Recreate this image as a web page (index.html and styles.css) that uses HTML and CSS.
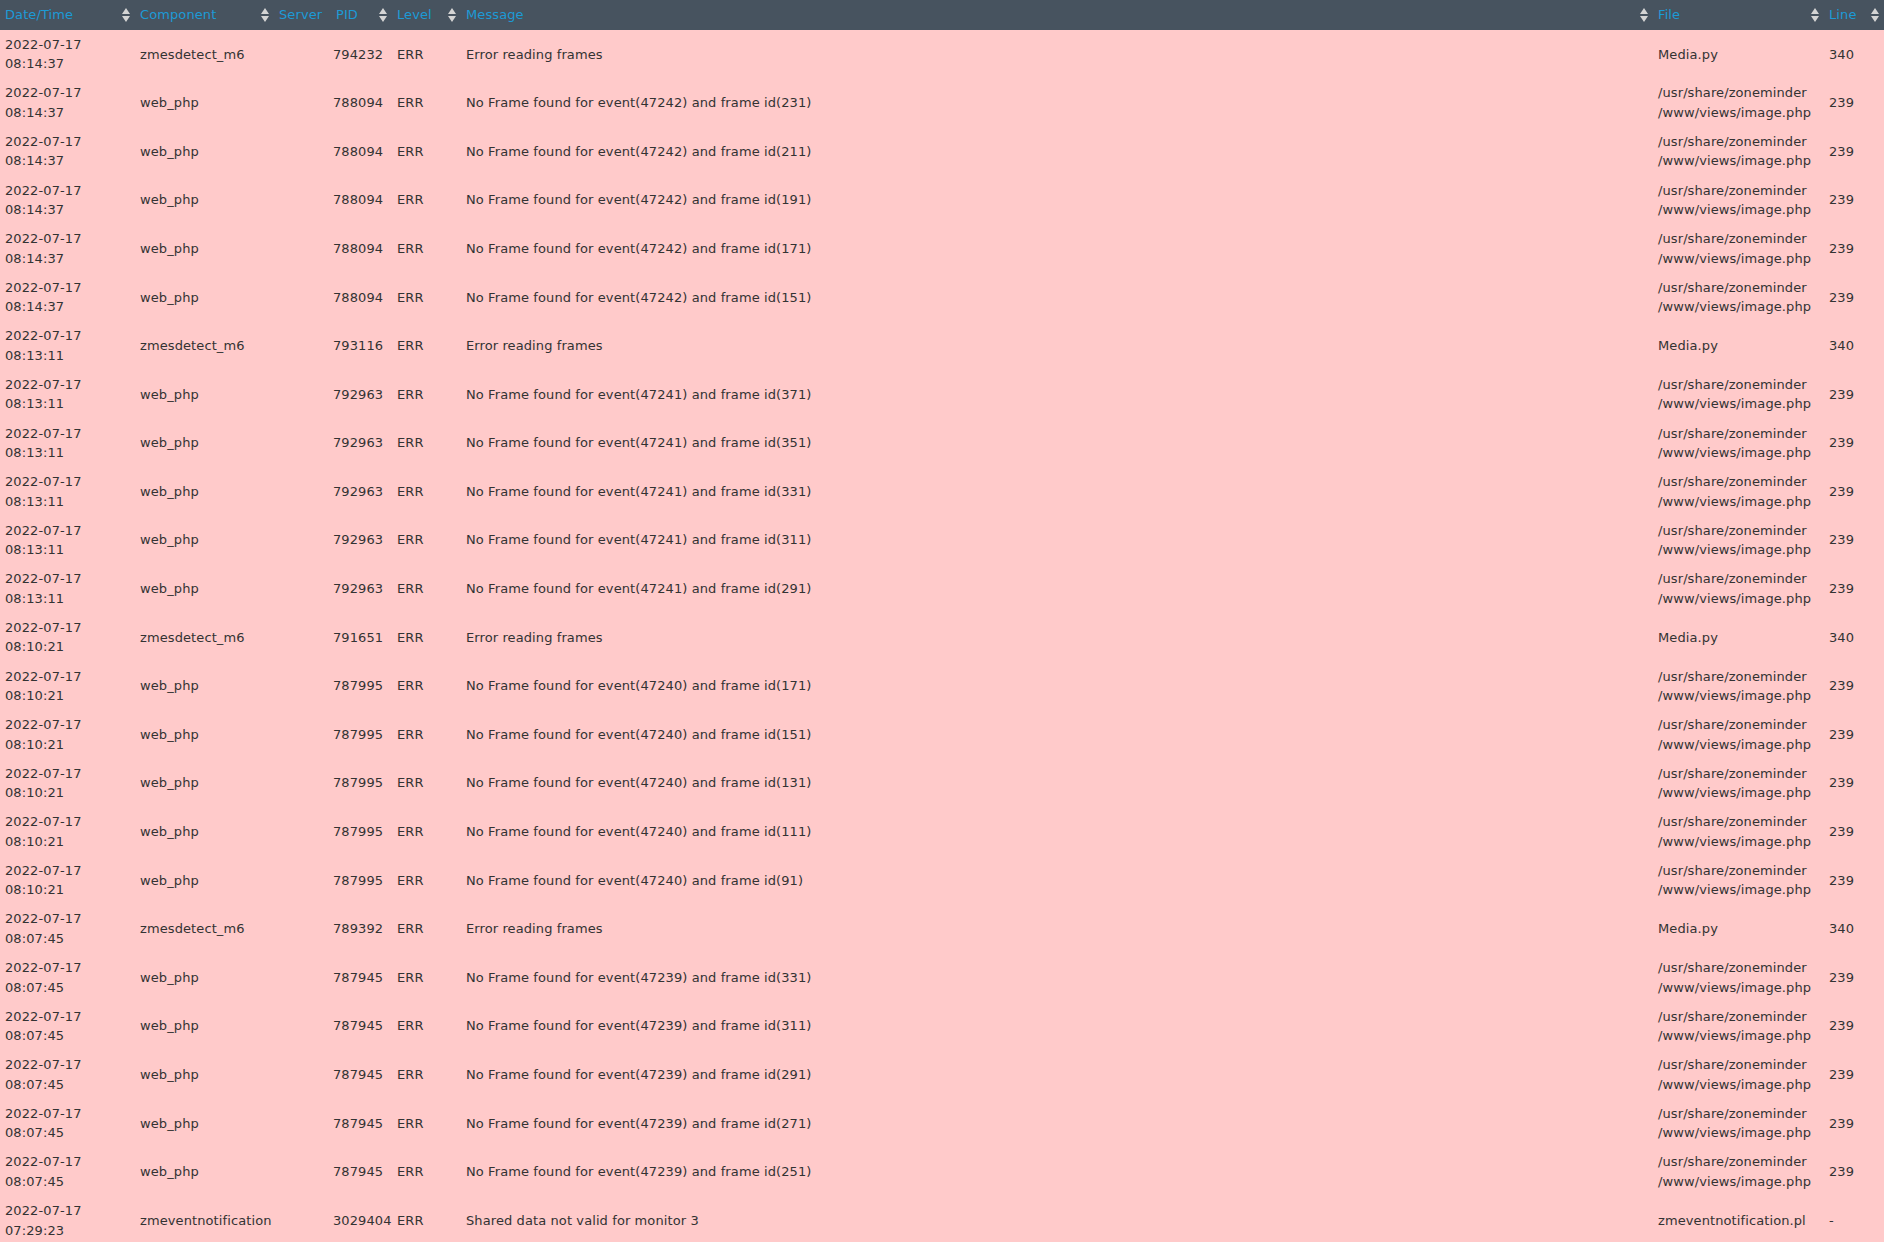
FILE: index.html
```html
<!DOCTYPE html>
<html>
<head>
<meta charset="utf-8">
<link rel="stylesheet" href="styles.css">
</head>
<body>
<table class="log">
<colgroup>
<col class="c-date"><col class="c-comp"><col class="c-server"><col class="c-pid"><col class="c-level"><col class="c-msg"><col class="c-file"><col class="c-line">
</colgroup>
<thead>
<tr>
<th><div class="th-in"><span>Date/Time</span><svg class="sort" viewBox="0 0 8 14"><path d="M0 6 L4 0 L8 6Z M0 8 L4 14 L8 8Z"/></svg></div></th>
<th><div class="th-in"><span>Component</span><svg class="sort" viewBox="0 0 8 14"><path d="M0 6 L4 0 L8 6Z M0 8 L4 14 L8 8Z"/></svg></div></th>
<th><div class="th-in"><span>Server</span></div></th>
<th><div class="th-in"><span>PID</span><svg class="sort" viewBox="0 0 8 14"><path d="M0 6 L4 0 L8 6Z M0 8 L4 14 L8 8Z"/></svg></div></th>
<th><div class="th-in"><span>Level</span><svg class="sort" viewBox="0 0 8 14"><path d="M0 6 L4 0 L8 6Z M0 8 L4 14 L8 8Z"/></svg></div></th>
<th><div class="th-in"><span>Message</span><svg class="sort" viewBox="0 0 8 14"><path d="M0 6 L4 0 L8 6Z M0 8 L4 14 L8 8Z"/></svg></div></th>
<th><div class="th-in"><span>File</span><svg class="sort" viewBox="0 0 8 14"><path d="M0 6 L4 0 L8 6Z M0 8 L4 14 L8 8Z"/></svg></div></th>
<th><div class="th-in"><span>Line</span><svg class="sort" viewBox="0 0 8 14"><path d="M0 6 L4 0 L8 6Z M0 8 L4 14 L8 8Z"/></svg></div></th>
</tr>
</thead>
<tbody>
<tr><td>2022-07-17<br>08:14:37</td><td>zmesdetect_m6</td><td></td><td class="pid">794232</td><td>ERR</td><td>Error reading frames</td><td>Media.py</td><td>340</td></tr>
<tr><td>2022-07-17<br>08:14:37</td><td>web_php</td><td></td><td class="pid">788094</td><td>ERR</td><td>No Frame found for event(47242) and frame id(231)</td><td>/usr/share/zoneminder<br>/www/views/image.php</td><td>239</td></tr>
<tr><td>2022-07-17<br>08:14:37</td><td>web_php</td><td></td><td class="pid">788094</td><td>ERR</td><td>No Frame found for event(47242) and frame id(211)</td><td>/usr/share/zoneminder<br>/www/views/image.php</td><td>239</td></tr>
<tr><td>2022-07-17<br>08:14:37</td><td>web_php</td><td></td><td class="pid">788094</td><td>ERR</td><td>No Frame found for event(47242) and frame id(191)</td><td>/usr/share/zoneminder<br>/www/views/image.php</td><td>239</td></tr>
<tr><td>2022-07-17<br>08:14:37</td><td>web_php</td><td></td><td class="pid">788094</td><td>ERR</td><td>No Frame found for event(47242) and frame id(171)</td><td>/usr/share/zoneminder<br>/www/views/image.php</td><td>239</td></tr>
<tr><td>2022-07-17<br>08:14:37</td><td>web_php</td><td></td><td class="pid">788094</td><td>ERR</td><td>No Frame found for event(47242) and frame id(151)</td><td>/usr/share/zoneminder<br>/www/views/image.php</td><td>239</td></tr>
<tr><td>2022-07-17<br>08:13:11</td><td>zmesdetect_m6</td><td></td><td class="pid">793116</td><td>ERR</td><td>Error reading frames</td><td>Media.py</td><td>340</td></tr>
<tr><td>2022-07-17<br>08:13:11</td><td>web_php</td><td></td><td class="pid">792963</td><td>ERR</td><td>No Frame found for event(47241) and frame id(371)</td><td>/usr/share/zoneminder<br>/www/views/image.php</td><td>239</td></tr>
<tr><td>2022-07-17<br>08:13:11</td><td>web_php</td><td></td><td class="pid">792963</td><td>ERR</td><td>No Frame found for event(47241) and frame id(351)</td><td>/usr/share/zoneminder<br>/www/views/image.php</td><td>239</td></tr>
<tr><td>2022-07-17<br>08:13:11</td><td>web_php</td><td></td><td class="pid">792963</td><td>ERR</td><td>No Frame found for event(47241) and frame id(331)</td><td>/usr/share/zoneminder<br>/www/views/image.php</td><td>239</td></tr>
<tr><td>2022-07-17<br>08:13:11</td><td>web_php</td><td></td><td class="pid">792963</td><td>ERR</td><td>No Frame found for event(47241) and frame id(311)</td><td>/usr/share/zoneminder<br>/www/views/image.php</td><td>239</td></tr>
<tr><td>2022-07-17<br>08:13:11</td><td>web_php</td><td></td><td class="pid">792963</td><td>ERR</td><td>No Frame found for event(47241) and frame id(291)</td><td>/usr/share/zoneminder<br>/www/views/image.php</td><td>239</td></tr>
<tr><td>2022-07-17<br>08:10:21</td><td>zmesdetect_m6</td><td></td><td class="pid">791651</td><td>ERR</td><td>Error reading frames</td><td>Media.py</td><td>340</td></tr>
<tr><td>2022-07-17<br>08:10:21</td><td>web_php</td><td></td><td class="pid">787995</td><td>ERR</td><td>No Frame found for event(47240) and frame id(171)</td><td>/usr/share/zoneminder<br>/www/views/image.php</td><td>239</td></tr>
<tr><td>2022-07-17<br>08:10:21</td><td>web_php</td><td></td><td class="pid">787995</td><td>ERR</td><td>No Frame found for event(47240) and frame id(151)</td><td>/usr/share/zoneminder<br>/www/views/image.php</td><td>239</td></tr>
<tr><td>2022-07-17<br>08:10:21</td><td>web_php</td><td></td><td class="pid">787995</td><td>ERR</td><td>No Frame found for event(47240) and frame id(131)</td><td>/usr/share/zoneminder<br>/www/views/image.php</td><td>239</td></tr>
<tr><td>2022-07-17<br>08:10:21</td><td>web_php</td><td></td><td class="pid">787995</td><td>ERR</td><td>No Frame found for event(47240) and frame id(111)</td><td>/usr/share/zoneminder<br>/www/views/image.php</td><td>239</td></tr>
<tr><td>2022-07-17<br>08:10:21</td><td>web_php</td><td></td><td class="pid">787995</td><td>ERR</td><td>No Frame found for event(47240) and frame id(91)</td><td>/usr/share/zoneminder<br>/www/views/image.php</td><td>239</td></tr>
<tr><td>2022-07-17<br>08:07:45</td><td>zmesdetect_m6</td><td></td><td class="pid">789392</td><td>ERR</td><td>Error reading frames</td><td>Media.py</td><td>340</td></tr>
<tr><td>2022-07-17<br>08:07:45</td><td>web_php</td><td></td><td class="pid">787945</td><td>ERR</td><td>No Frame found for event(47239) and frame id(331)</td><td>/usr/share/zoneminder<br>/www/views/image.php</td><td>239</td></tr>
<tr><td>2022-07-17<br>08:07:45</td><td>web_php</td><td></td><td class="pid">787945</td><td>ERR</td><td>No Frame found for event(47239) and frame id(311)</td><td>/usr/share/zoneminder<br>/www/views/image.php</td><td>239</td></tr>
<tr><td>2022-07-17<br>08:07:45</td><td>web_php</td><td></td><td class="pid">787945</td><td>ERR</td><td>No Frame found for event(47239) and frame id(291)</td><td>/usr/share/zoneminder<br>/www/views/image.php</td><td>239</td></tr>
<tr><td>2022-07-17<br>08:07:45</td><td>web_php</td><td></td><td class="pid">787945</td><td>ERR</td><td>No Frame found for event(47239) and frame id(271)</td><td>/usr/share/zoneminder<br>/www/views/image.php</td><td>239</td></tr>
<tr><td>2022-07-17<br>08:07:45</td><td>web_php</td><td></td><td class="pid">787945</td><td>ERR</td><td>No Frame found for event(47239) and frame id(251)</td><td>/usr/share/zoneminder<br>/www/views/image.php</td><td>239</td></tr>
<tr><td>2022-07-17<br>07:29:23</td><td>zmeventnotification</td><td></td><td class="pid">3029404</td><td>ERR</td><td>Shared data not valid for monitor 3</td><td>zmeventnotification.pl</td><td>-</td></tr>
</tbody>
</table>
</body>
</html>
```

FILE: styles.css
```css
html, body {
  margin: 0;
  padding: 0;
  background: #ffcaca;
}
body {
  font-family: "DejaVu Sans", Verdana, sans-serif;
  font-size: 13px;
  line-height: 1.5;
  letter-spacing: 0.1px;
  color: #333333;
}
.log {
  width: 100%;
  border-collapse: collapse;
  table-layout: fixed;
}
.c-date { width: 135px; }
.c-comp { width: 139px; }
.c-server { width: 57px; }
.c-pid { width: 61px; }
.c-level { width: 69px; }
.c-msg { width: auto; }
.c-file { width: 171px; }
.c-line { width: 60px; }
.log thead th {
  background: #47535f;
  color: #1c9ad6;
  font-weight: normal;
  text-align: left;
  padding: 5px 4px 5px 5px;
  height: 20px;
}
.th-in {
  display: flex;
  align-items: center;
  justify-content: space-between;
  white-space: nowrap;
}
.sort {
  width: 8px;
  height: 14px;
  flex: none;
  fill: #d4d4d4;
  margin-right: 1px;
}
.log tbody td {
  background: #ffcaca;
  padding: 4.8px 3px 4.8px 5px;
  vertical-align: middle;
  white-space: nowrap;
}
.log tbody td.pid {
  padding-left: 2px;
}
```
